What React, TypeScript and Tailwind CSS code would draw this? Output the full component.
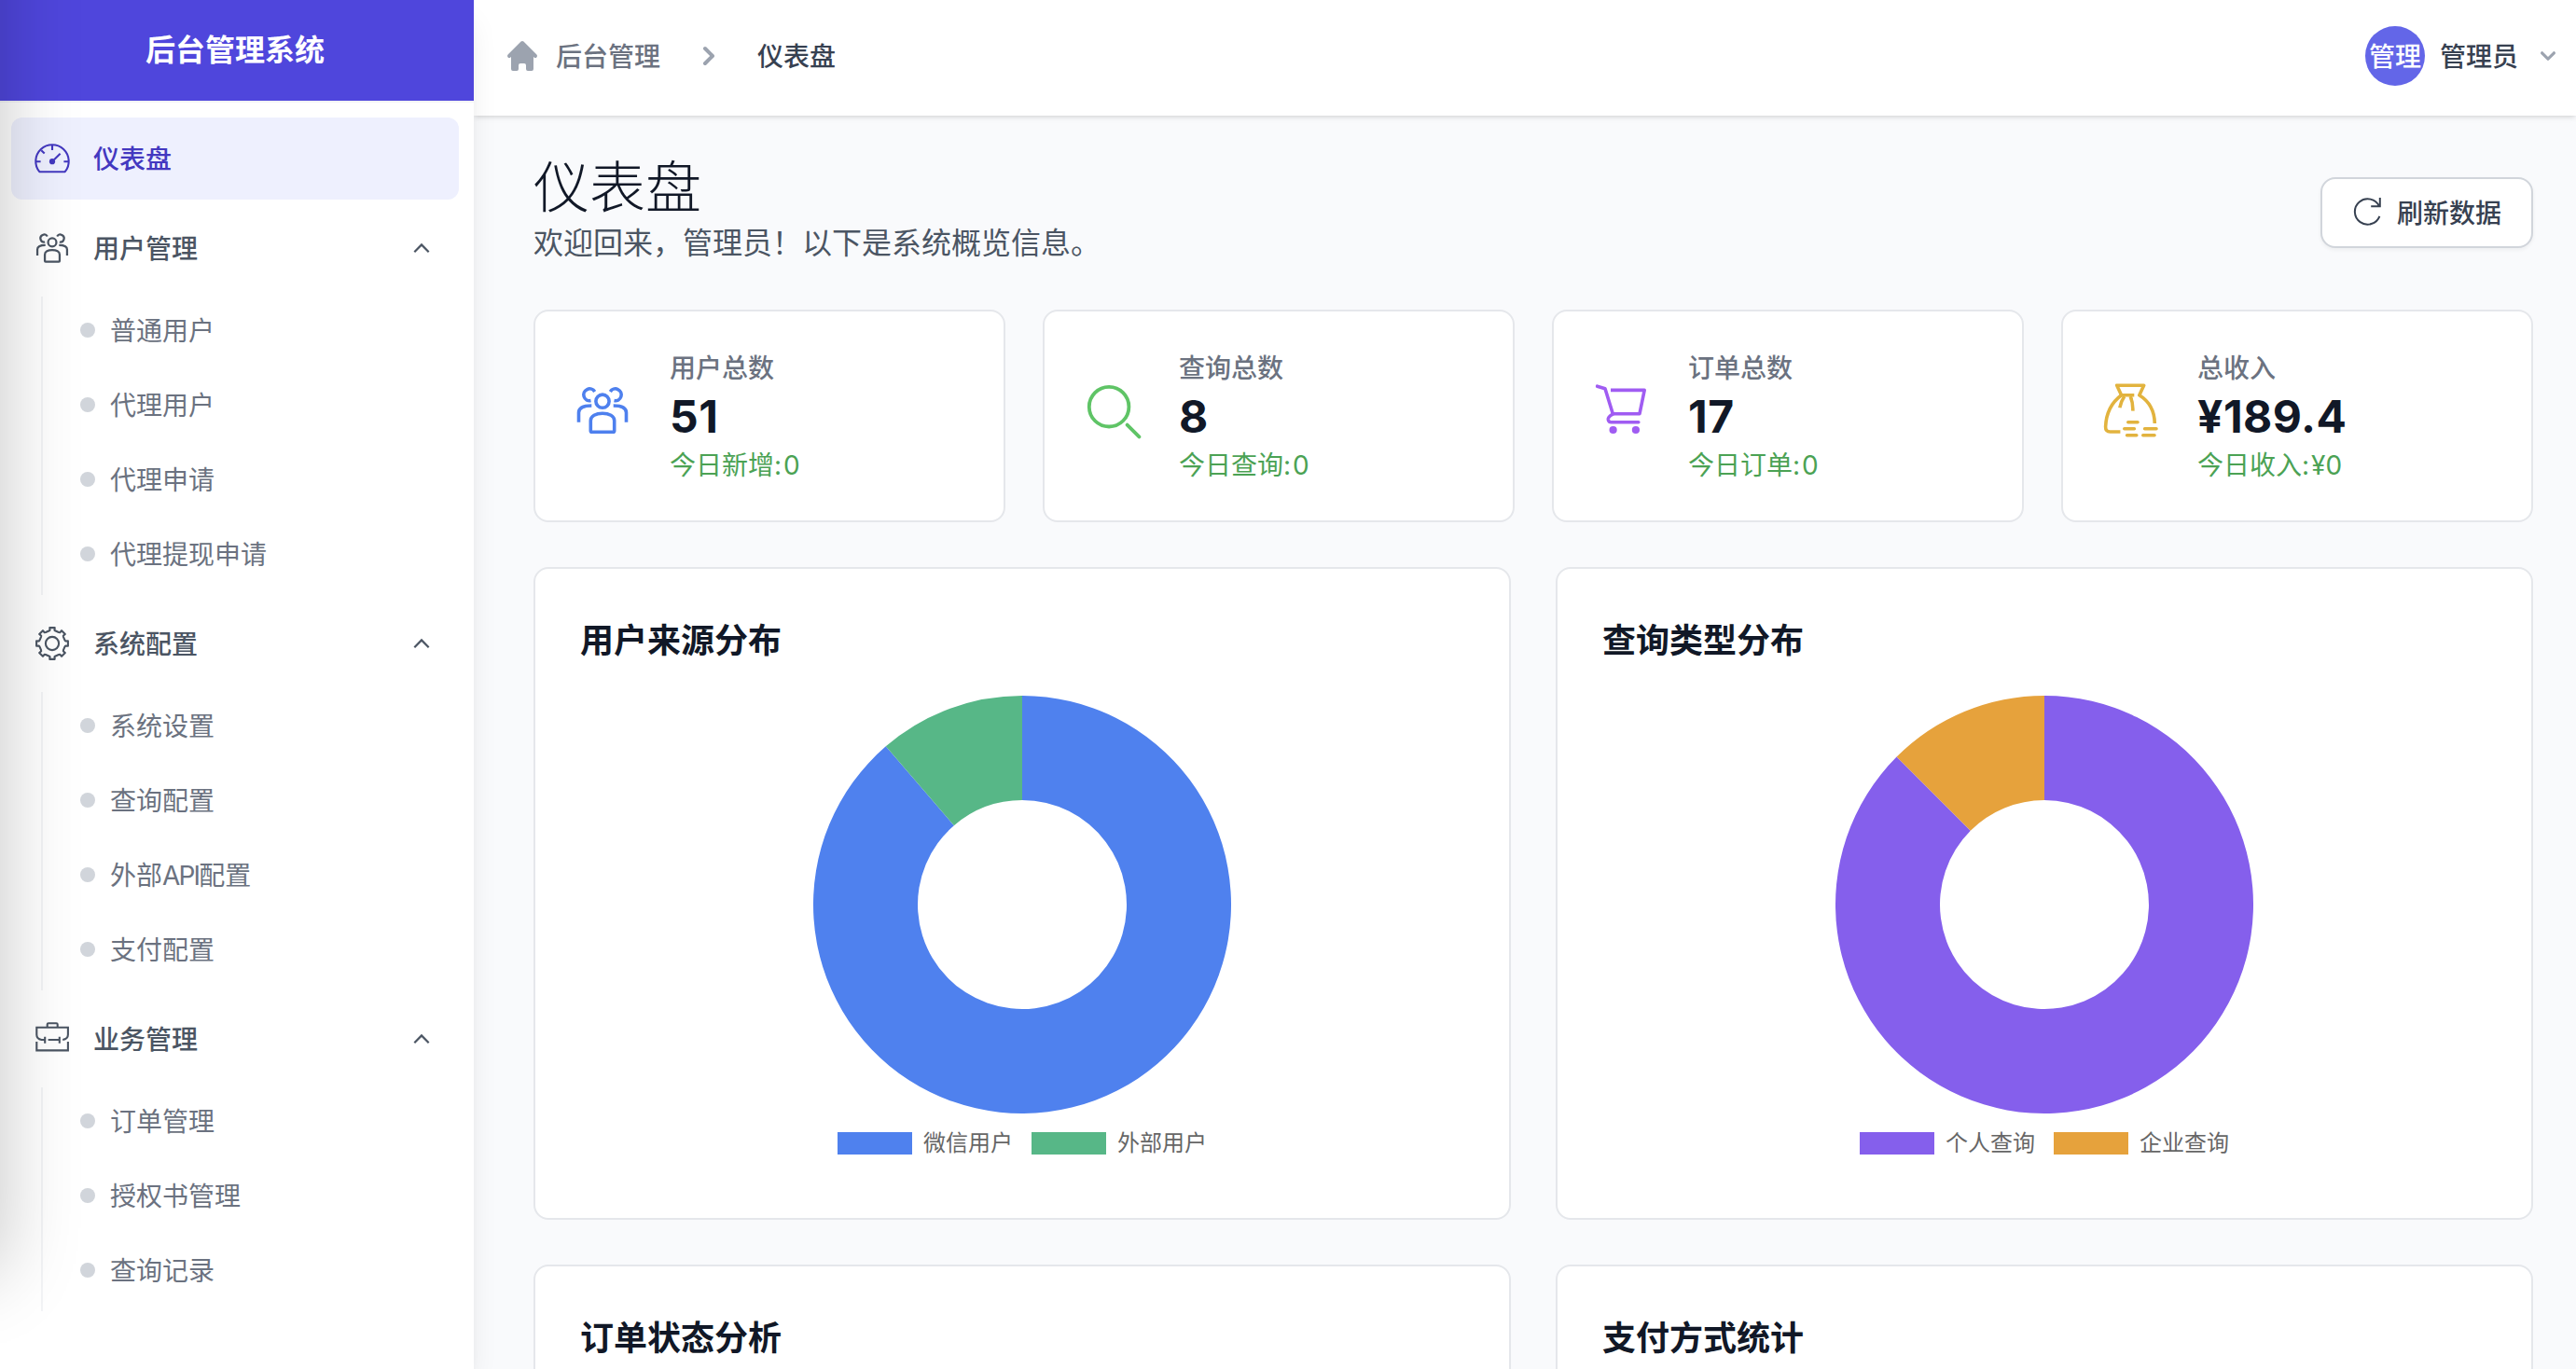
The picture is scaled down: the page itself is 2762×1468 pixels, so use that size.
import type { ReactNode } from "react";

type IconProps = { className?: string };

function UsersIcon({ className }: IconProps) {
  return (
    <svg viewBox="0 0 64 64" fill="none" stroke="currentColor" strokeWidth="3.6" className={className}>
      <path d="M6.5 44.7V34.5C6.5 29 11 27 20.3 27M57.5 44.7V34.5C57.5 29 53 27 43.7 27" />
      <path d="M23.7 12A6.4 6.4 0 1 0 19.5 21.6M40.3 12A6.4 6.4 0 1 1 44.5 21.6" />
      <circle cx="32" cy="22.2" r="7.1" />
      <path d="M19.3 54V43C19.3 38 25 35.3 32 35.3S44.7 38 44.7 43V54Q44.7 55.3 43.4 55.3H20.6Q19.3 55.3 19.3 54Z" />
    </svg>
  );
}

function SearchIcon({ className }: IconProps) {
  return (
    <svg viewBox="0 0 64 64" fill="none" stroke="currentColor" strokeWidth="3.8" className={className}>
      <circle cx="29.1" cy="28.2" r="21.3" />
      <path d="M48.6 47.6L61.4 60.4" strokeLinecap="round" />
    </svg>
  );
}

function CartIcon({ className }: IconProps) {
  return (
    <svg viewBox="0 0 64 64" fill="none" stroke="currentColor" strokeWidth="3.6" className={className}>
      <path d="M6.6 6.2L15 8.7L23.3 35.7" strokeLinecap="round" strokeLinejoin="round" />
      <path d="M21 10.4H57.2L52 35.7H23.3" strokeLinejoin="round" />
      <path d="M23.3 36Q17.9 39 18.3 42Q18.8 44.7 21.5 44.7H50.8" strokeLinecap="round" />
      <circle cx="23.6" cy="53" r="4.1" fill="currentColor" stroke="none" />
      <circle cx="47.9" cy="53" r="4.1" fill="currentColor" stroke="none" />
    </svg>
  );
}

function MoneyBagIcon({ className }: IconProps) {
  return (
    <svg viewBox="0 0 64 64" fill="none" stroke="currentColor" strokeWidth="3.6" className={className}>
      <path d="M36.3 15.8H22.6L17.7 5.2H46.7L41.8 15.8C51 21.5 58 31 58.3 46" strokeLinejoin="round" />
      <path d="M22.6 15.8C11.5 24 6.2 36 5.6 49.5Q5.4 55 10.5 55H21.4" />
      <path d="M25.8 17Q22 22.5 20.8 29.2M32.2 17Q35.2 24 34.8 32.6" />
      <path d="M29.8 44.7H40M25.8 51.7H36.4M47.6 51.7H60M28.6 58.7H38.8M45.8 58.7H58" strokeLinecap="round" />
    </svg>
  );
}

function GaugeIcon({ className }: IconProps) {
  return (
    <svg viewBox="0 0 40 40" fill="none" stroke="currentColor" strokeWidth="2.1" className={className}>
      <path d="M6.3 34.2A17.7 17.7 0 1 1 33.7 34.2Z" strokeLinejoin="round" />
      <path d="M20 6V11M2.6 23.2H7.6M32.4 23.2H37.4M8.3 11.2L11.7 14.4M22 21.2L28.6 14.8" />
      <circle cx="20" cy="23.2" r="3.1" fill="currentColor" stroke="none" />
    </svg>
  );
}

const gearPath =
  [0, 45, 90, 135, 180, 225, 270, 315]
    .flatMap((a) => [
      [a - 15, 13.9],
      [a - 10, 14.4],
      [a - 9, 17.1],
      [a + 9, 17.1],
      [a + 10, 14.4],
      [a + 15, 13.9],
    ])
    .map(([deg, r], i) => {
      const t = (deg * Math.PI) / 180;
      return `${i ? "L" : "M"}${(20 + r * Math.sin(t)).toFixed(2)} ${(20 - r * Math.cos(t)).toFixed(2)}`;
    })
    .join("") + "Z";

function GearIcon({ className }: IconProps) {
  return (
    <svg viewBox="0 0 40 40" fill="none" stroke="currentColor" strokeWidth="2.1" strokeLinejoin="round" className={className}>
      <path d={gearPath} />
      <circle cx="20" cy="20" r="7.1" />
    </svg>
  );
}

function BriefcaseIcon({ className }: IconProps) {
  return (
    <svg viewBox="0 0 40 40" fill="none" stroke="currentColor" strokeWidth="2.1" className={className}>
      <path d="M14.7 7.6V4.6Q14.7 3.3 16 3.3H24.4Q25.7 3.3 25.7 4.6V7.6" />
      <path d="M12 21H8.5Q3.3 20 3.3 15.5V7.7H36.9V15.5Q36.9 20 31.2 21M12.2 17.8V24.8M27.8 17.8V24.8M15.6 21H27.8M3.3 23V32.4H36.9V23" />
    </svg>
  );
}

function RefreshIcon({ className }: IconProps) {
  return (
    <svg viewBox="0 0 32 32" fill="none" stroke="currentColor" strokeWidth="2" className={className}>
      <path d="M29 9.2A13.7 13.7 0 1 0 29.4 19.8M29.8 0V9.3H20.2" />
    </svg>
  );
}

function HomeIcon({ className }: IconProps) {
  return (
    <svg viewBox="0 0 20 20" fill="currentColor" className={className}>
      <path d="M10.707 2.293a1 1 0 00-1.414 0l-7 7a1 1 0 001.414 1.414L4 10.414V17a1 1 0 001 1h2a1 1 0 001-1v-2a1 1 0 011-1h2a1 1 0 011 1v2a1 1 0 001 1h2a1 1 0 001-1v-6.586l.293.293a1 1 0 001.414-1.414l-7-7z" />
    </svg>
  );
}

function ChevronRightIcon({ className }: IconProps) {
  return (
    <svg viewBox="0 0 20 20" fill="currentColor" className={className}>
      <path d="M7.293 14.707a1 1 0 010-1.414L10.586 10 7.293 6.707a1 1 0 011.414-1.414l4 4a1 1 0 010 1.414l-4 4a1 1 0 01-1.414 0z" />
    </svg>
  );
}

function ChevronDownIcon({ className }: IconProps) {
  return (
    <svg viewBox="0 0 20 20" fill="currentColor" className={className}>
      <path d="M5.293 7.293a1 1 0 011.414 0L10 10.586l3.293-3.293a1 1 0 111.414 1.414l-4 4a1 1 0 01-1.414 0l-4-4a1 1 0 010-1.414z" />
    </svg>
  );
}

function ChevronUpIcon({ className }: IconProps) {
  return (
    <svg viewBox="0 0 24 24" fill="none" stroke="currentColor" strokeWidth="2.2" className={className}>
      <path d="M4.3 16.2L12 8.4L19.7 16.2" />
    </svg>
  );
}

type Group = { label: string; icon: ReactNode; items: ReactNode[] };

const groups: Group[] = [
  {
    label: "用户管理",
    icon: <UsersIcon className="size-10" />,
    items: ["普通用户", "代理用户", "代理申请", "代理提现申请"],
  },
  {
    label: "系统配置",
    icon: <GearIcon className="size-10" />,
    items: [
      "系统设置",
      "查询配置",
      <>
        外部<span className="tracking-[-1.8px]">API</span>配置
      </>,
      "支付配置",
    ],
  },
  {
    label: "业务管理",
    icon: <BriefcaseIcon className="size-10" />,
    items: ["订单管理", "授权书管理", "查询记录"],
  },
];

function Sidebar() {
  return (
    <aside className="relative z-20 flex h-full w-[508px] shrink-0 flex-col bg-white shadow-[0_20px_30px_-6px_rgba(0,0,0,0.1),0_8px_12px_-8px_rgba(0,0,0,0.1)]">
      <div className="flex h-[108px] items-center justify-center bg-[#4f46dc] pr-1 text-[32px] leading-none font-bold text-white">
        后台管理系统
      </div>
      <nav className="flex flex-col border-t-2 border-gray-100 pt-4 pr-4 pl-3 text-[28px] leading-10">
        <div className="flex h-[88px] items-center gap-6 rounded-xl bg-[#eef0fe] px-6 font-medium text-[#4338c0]">
          <GaugeIcon className="size-10" />
          <span className="pt-0.5">仪表盘</span>
        </div>
        {groups.map((group) => (
          <div key={group.label} className="pt-2">
            <div className="flex h-[88px] items-center gap-6 px-6 pr-7 font-medium text-[#4b5563]">
              {group.icon}
              <span className="flex-1 pt-0.5">{group.label}</span>
              <ChevronUpIcon className="size-6" />
            </div>
            <ul className="mt-2 ml-8 flex flex-col gap-2 border-l-2 border-gray-100 pb-2">
              {group.items.map((item, i) => (
                <li key={i} className="flex h-[72px] items-center gap-4 pl-10 text-[#6b7280]">
                  <span className="size-4 rounded-full bg-[#d1d5db]" />
                  <span className="pt-0.5">{item}</span>
                </li>
              ))}
            </ul>
          </div>
        ))}
      </nav>
    </aside>
  );
}

function TopBar() {
  return (
    <header className="relative z-10 flex h-[124px] shrink-0 items-center justify-between bg-white pr-3.5 pb-1 pl-8 text-[28px] leading-10 font-medium shadow-[0_2px_6px_rgba(0,0,0,0.1),0_2px_4px_-2px_rgba(0,0,0,0.1)]">
      <div className="flex items-center">
        <HomeIcon className="size-10 text-[#9ca3af]" />
        <span className="ml-4 pt-0.5 text-[#6b7280]">后台管理</span>
        <ChevronRightIcon className="mx-8 size-10 text-[#9ca3af]" />
        <span className="pt-0.5 text-[#374151]">仪表盘</span>
      </div>
      <div className="flex items-center gap-4">
        <div className="flex size-16 items-center justify-center rounded-full bg-[#6366e8] pt-0.5 text-white">
          管理
        </div>
        <span className="pt-0.5 text-[#374151]">管理员</span>
        <ChevronDownIcon className="size-8 text-[#9ca3af]" />
      </div>
    </header>
  );
}

const stats = [
  { label: "用户总数", value: "51", today: "今日新增:", amount: "0", icon: <UsersIcon className="size-16 text-[#4e80ee]" /> },
  { label: "查询总数", value: "8", today: "今日查询:", amount: "0", icon: <SearchIcon className="size-16 text-[#5fc466]" /> },
  { label: "订单总数", value: "17", today: "今日订单:", amount: "0", icon: <CartIcon className="size-16 text-[#a05cf2]" /> },
  { label: "总收入", value: "¥189.4", today: "今日收入:", amount: "¥0", icon: <MoneyBagIcon className="size-16 text-[#e2b33e]" /> },
];

function StatCards() {
  return (
    <section className="grid grid-cols-4 gap-10">
      {stats.map((s) => (
        <div key={s.label} className="flex h-[228px] items-center gap-10 rounded-2xl border-2 border-[#e5e7eb] bg-white px-10">
          <div className="pb-3">{s.icon}</div>
          <div className="flex flex-col pt-0.5">
            <div className="h-10 text-[28px] leading-10 font-medium text-[#6b7280]">{s.label}</div>
            <div className="h-16 text-[48px] leading-16 font-bold tracking-[0.5px] text-[#111827]">{s.value}</div>
            <div className="h-10 text-[28px] leading-10 text-[#4ba254]">
              {s.today}
              <span className="ml-0.5">{s.amount}</span>
            </div>
          </div>
        </div>
      ))}
    </section>
  );
}

type Slice = { label: string; share: number; color: string };

/* Ring segment between two clockwise angles in degrees, 0 at twelve o'clock. */
function ringPath(from: number, to: number) {
  const at = (r: number, deg: number) => {
    const t = (deg * Math.PI) / 180;
    return `${(224 + r * Math.sin(t)).toFixed(2)} ${(224 - r * Math.cos(t)).toFixed(2)}`;
  };
  const large = to - from > 180 ? 1 : 0;
  return `M${at(224, from)}A224 224 0 ${large} 1 ${at(224, to)}L${at(112, to)}A112 112 0 ${large} 0 ${at(112, from)}Z`;
}

function Donut({ slices }: { slices: Slice[] }) {
  let angle = 0;
  return (
    <svg viewBox="0 0 448 448" className="size-[448px]">
      {slices.map((s) => {
        const start = angle;
        angle += s.share * 360;
        return <path key={s.label} d={ringPath(start, angle)} fill={s.color} />;
      })}
    </svg>
  );
}

function ChartCard({ title, slices }: { title: string; slices?: Slice[] }) {
  return (
    <div className="flex h-[700px] flex-col rounded-2xl border-2 border-[#e5e7eb] bg-white px-12 pt-[49px]">
      <h2 className="h-14 text-[36px] leading-14 font-semibold text-[#111827]">{title}</h2>
      {slices && (
        <div className="flex flex-col items-center pt-[31px]">
          <Donut slices={slices} />
          <div className="mt-5 flex gap-5">
            {slices.map((s) => (
              <div key={s.label} className="flex h-6 items-center gap-3 text-[24px] leading-6 text-[#666]">
                <span className="h-6 w-20" style={{ backgroundColor: s.color }} />
                <span>{s.label}</span>
              </div>
            ))}
          </div>
        </div>
      )}
    </div>
  );
}

export default function App() {
  return (
    <div className="relative flex h-[1468px] w-[2762px] overflow-hidden bg-[#f9fafc] font-[Inter,'Noto_Sans_CJK_SC',sans-serif]">
      <Sidebar />
      <div className="flex min-w-0 flex-1 flex-col">
        <TopBar />
        <main className="flex flex-col gap-12 pt-10 pr-[46px] pl-16">
          <div className="flex flex-col gap-10">
            <div className="flex h-32 items-center justify-between">
              <div className="pb-1.5">
                <h1 className="h-[72px] text-[60px] leading-[72px] font-light text-[#111827]">仪表盘</h1>
                <p className="h-12 text-[32px] leading-12 text-[#4b5563]">欢迎回来，管理员！以下是系统概览信息。</p>
              </div>
              <button className="flex h-[76px] items-center gap-4 rounded-2xl border-2 border-[#d1d5db] bg-white px-8 text-[28px] font-medium text-[#374151] shadow-[0_2px_4px_rgba(0,0,0,0.05)]">
                <RefreshIcon className="size-8" />
                <span className="pt-0.5">刷新数据</span>
              </button>
            </div>
            <StatCards />
          </div>
          <section className="grid grid-cols-2 gap-12">
            <ChartCard
              title="用户来源分布"
              slices={[
                { label: "微信用户", share: 0.8868, color: "#4f81ee" },
                { label: "外部用户", share: 0.1132, color: "#57b787" },
              ]}
            />
            <ChartCard
              title="查询类型分布"
              slices={[
                { label: "个人查询", share: 0.875, color: "#855fec" },
                { label: "企业查询", share: 0.125, color: "#e6a23c" },
              ]}
            />
            <ChartCard title="订单状态分析" />
            <ChartCard title="支付方式统计" />
          </section>
        </main>
      </div>
      {/* Soft shade cast over the left edge of the window */}
      <div className="pointer-events-none absolute -top-40 -left-96 z-30 h-[1524px] w-96 shadow-[0_0_80px_rgba(0,0,0,0.23)]" />
    </div>
  );
}
